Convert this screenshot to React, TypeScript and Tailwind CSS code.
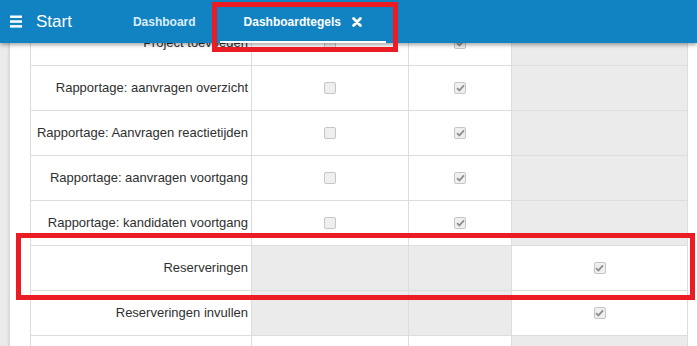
import React from "react";

type Row = {
  label: string;
  cells: ("off" | "on" | "gray" | "blank")[];
};

const ROWS: Row[] = [
  { label: "Project toevoegen", cells: ["off", "on", "gray"] },
  { label: "Rapportage: aanvragen overzicht", cells: ["off", "on", "gray"] },
  { label: "Rapportage: Aanvragen reactietijden", cells: ["off", "on", "gray"] },
  { label: "Rapportage: aanvragen voortgang", cells: ["off", "on", "gray"] },
  { label: "Rapportage: kandidaten voortgang", cells: ["off", "on", "gray"] },
  { label: "Reserveringen", cells: ["gray", "gray", "on"] },
  { label: "Reserveringen invullen", cells: ["gray", "gray", "on"] },
  { label: "", cells: ["blank", "blank", "gray"] },
];

const COL_WIDTHS = ["w-[157px]", "w-[103px]", "w-[176px]"];

function Checkbox({ checked }: { checked: boolean }) {
  return (
    <span className="flex h-[12px] w-[12px] items-center justify-center rounded-[2px] border border-[#c6c6c6] bg-[#efefef]">
      {checked && (
        <svg width="9" height="8" viewBox="0 0 9 8">
          <path d="M1 4.2 L3.4 6.4 L8 1.4" fill="none" stroke="#8f8f8f" strokeWidth="1.8" />
        </svg>
      )}
    </span>
  );
}

function Header() {
  return (
    <div className="absolute left-0 right-0 top-0 z-10 flex h-[43px] items-center bg-[#1183c3] shadow-[0_2px_4px_rgba(0,0,0,0.35)]">
      <svg className="ml-[10px] mb-[1px]" width="12" height="13" viewBox="0 0 12 13">
        <rect x="0" y="0.5" width="12" height="2.5" fill="#ffffff" />
        <rect x="0" y="5.3" width="12" height="2.5" fill="#ffffff" />
        <rect x="0" y="10.1" width="12" height="2.5" fill="#ffffff" />
      </svg>
      <span className="ml-[14px] text-[17px] leading-none text-white">Start</span>
      <div className="ml-[37px] flex h-full items-stretch">
        <div className="flex items-center px-[24px] text-[12px] font-bold text-[#dcedf8]">Dashboard</div>
        <div className="flex items-center border-b-2 border-white px-[24px] pt-[2px] text-[12px] font-bold text-white">
          Dashboardtegels
          <svg className="ml-[11px]" width="10" height="10" viewBox="0 0 10 10">
            <path d="M1.6 1.6 L8.4 8.4 M8.4 1.6 L1.6 8.4" stroke="#ffffff" strokeWidth="2.8" strokeLinecap="round" />
          </svg>
        </div>
      </div>
    </div>
  );
}

export default function App() {
  return (
    <div
      className="relative h-[346px] w-[697px] overflow-hidden bg-white"
      style={{ fontFamily: '"Liberation Sans", Arial, sans-serif' }}
    >
      <Header />
      <div className="flex h-full">
        <div className="w-[10px] shrink-0 bg-[#ebebeb] shadow-[inset_-2px_0_2px_rgba(0,0,0,0.08)]" />
        <div className="flex-1 pl-[20px] pt-[20px]">
          <div className="w-[658px] border-l border-t border-[#dddddd]">
            {ROWS.map((row, i) => (
              <div key={i} className="flex h-[45px]">
                <div className="flex w-[221px] items-center justify-end border-b border-r border-[#dddddd] pr-[3px] text-[13px] text-[#2f2f2f]">
                  {row.label}
                </div>
                {row.cells.map((c, j) => (
                  <div
                    key={j}
                    className={`flex items-center justify-center border-b border-r border-[#dddddd] ${COL_WIDTHS[j]} ${
                      c === "gray" ? "bg-[#ebebeb]" : "bg-white"
                    }`}
                  >
                    {(c === "on" || c === "off") && <Checkbox checked={c === "on"} />}
                  </div>
                ))}
              </div>
            ))}
          </div>
        </div>
      </div>
      <div className="absolute left-[212px] top-[2px] z-20 h-[50px] w-[186px] border-[5px] border-[#ec1c24]" />
      <div className="absolute left-[16px] top-[233px] z-20 h-[67px] w-[679px] border-[5px] border-[#ec1c24]" />
    </div>
  );
}
